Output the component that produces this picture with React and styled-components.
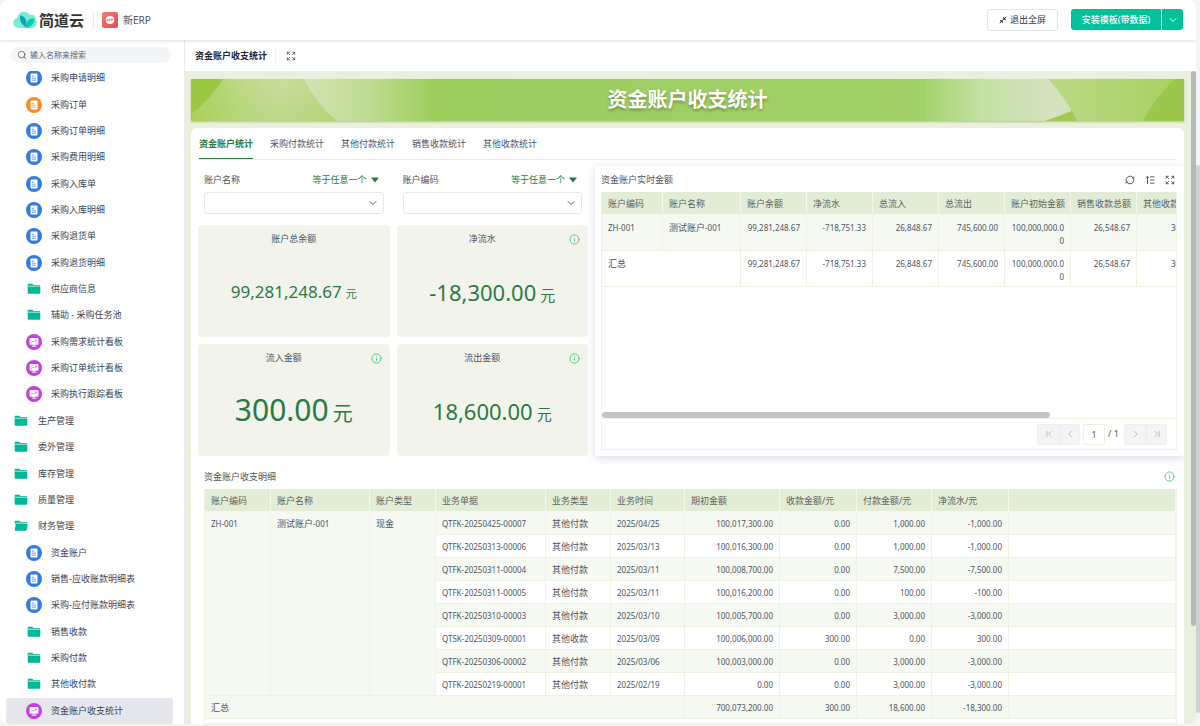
import React from "react";
import styled, { createGlobalStyle, css } from "styled-components";
import {
  ChevronDown,
  ChevronFirst,
  ChevronLast,
  ChevronLeft,
  ChevronRight,
  Expand,
  Info,
  Minimize2,
  Search
} from "lucide-react";

const colors = {
  teal: "#00c29a",
  green: "#2b7a45",
  info: "#4cc77c",
  text: "#4d5563",
  dark: "#1d2636",
  head: "#e3edd5",
  stripe: "#f6f9f2",
  line: "#edf2e2"
};

const GlobalStyle = createGlobalStyle`
  * {
    box-sizing: border-box;
  }

  body {
    margin: 0;
    background: #f4f4f5;
    color: ${colors.text};
    font: 9px/14px "Noto Sans", "Noto Sans CJK SC", sans-serif;
  }

  button,
  input,
  select {
    font: inherit;
    color: inherit;
    margin: 0;
  }

  button {
    padding: 0;
    border: 0;
    background: none;
    cursor: pointer;
  }
`;

const Window = styled.div`
  display: flex;
  height: 100vh;
  padding-bottom: 2px;
`;

const Frame = styled.div`
  display: flex;
  flex-direction: column;
  flex: 1;
  min-width: 0;
  overflow: hidden;
  border-radius: 8px;
  background: #fff;
`;

const OuterTrack = styled.div`
  display: flex;
  width: 4px;
  padding: 165px 0 11px;
`;

const OuterThumb = styled.div`
  flex: 1;
  border-radius: 2px;
  background: #d0d0d1;
`;

const Header = styled.header`
  display: flex;
  align-items: center;
  flex: none;
  height: 40px;
  padding: 0 13px;
  box-shadow: 0 1px 3px rgba(0, 0, 0, 0.14);
  z-index: 1;
`;

const Brand = styled.a`
  display: flex;
  align-items: center;
  gap: 2px;
  color: #333;
  font-size: 15px;
  font-weight: 700;
  line-height: 20px;
  text-decoration: none;
`;

const AppName = styled.div`
  display: flex;
  align-items: center;
  gap: 5px;
  height: 16px;
  margin-left: 9px;
  padding-left: 8px;
  border-left: 1px solid #ececee;
  font-size: 10px;
`;

const HeaderActions = styled.div`
  display: flex;
  margin-left: auto;
`;

const ExitButton = styled.button`
  display: flex;
  align-items: center;
  justify-content: center;
  gap: 3px;
  width: 71px;
  height: 22px;
  margin-right: 13px;
  border: 1px solid #e3e4e7;
  border-radius: 3px;
  color: #2f3747;
`;

const InstallButton = styled.button`
  width: ${(props) => (props.$small ? 21 : 90)}px;
  height: 21px;
  margin-left: ${(props) => (props.$small ? 1 : 0)}px;
  border-radius: ${(props) => (props.$small ? "0 3px 3px 0" : "3px 0 0 3px")};
  background: ${colors.teal};
  color: #fff;
  font-weight: 500;

  svg {
    display: block;
    margin: 0 auto;
  }
`;

const Body = styled.div`
  display: flex;
  flex: 1;
  min-height: 0;
`;

const Sidebar = styled.nav`
  display: flex;
  flex-direction: column;
  width: 184px;
  flex: none;
  padding-top: 7px;
`;

const SearchBox = styled.label`
  display: flex;
  align-items: center;
  gap: 3px;
  flex: none;
  height: 16px;
  margin: 0 13px 8px 11px;
  padding: 0 6px;
  border-radius: 8px;
  background: #f3f5f7;
  color: #5c6574;
  font-size: 8px;

  svg {
    flex: none;
  }

  input {
    width: 100%;
    padding: 0;
    border: 0;
    outline: 0;
    background: none;
  }

  input::placeholder {
    color: #5c6574;
    opacity: 1;
  }
`;

const NavScroll = styled.div`
  display: flex;
  flex: 1;
  min-height: 0;
  overflow: hidden;
`;

/* the list is scrolled a few pixels under the search box */
const NavList = styled.ul`
  display: flex;
  flex-direction: column;
  flex: 1;
  margin: -6px 11px 0 6px;
  padding: 0;
  list-style: none;
`;

const NavItem = styled.li`
  display: flex;
  flex: 1 0 26px;
  border-radius: 3px;
  background: ${(props) => (props.$active ? "#e6e7ed" : "none")};

  a {
    display: flex;
    align-items: center;
    gap: 9px;
    padding-left: ${(props) => (props.$nested ? 20 : 7)}px;
    color: #3c4556;
    text-decoration: none;
  }
`;

const Main = styled.main`
  display: flex;
  flex-direction: column;
  flex: 1;
  min-width: 0;
  border-left: 1px solid #e9ebee;
`;

const TitleBar = styled.div`
  display: flex;
  align-items: center;
  flex: none;
  height: 31px;
  padding-left: 10px;
  color: ${colors.dark};

  h1 {
    margin: 0;
    padding-right: 8px;
    border-right: 1px solid #eee;
    font-size: 9px;
    font-weight: 700;
  }

  button {
    margin-left: 10px;
    color: ${colors.text};
  }

  svg {
    display: block;
  }
`;

const Board = styled.div`
  display: flex;
  flex: 1;
  min-height: 0;
  background: #e9f0de;
`;

const BoardContent = styled.div`
  display: flex;
  flex-direction: column;
  flex: 1;
  min-width: 0;
  gap: 7px;
  padding: 8px 7px 0 6px;
`;

const BoardThumb = styled.div`
  width: 5px;
  height: 85%;
  border-radius: 3px;
  background: #b4bbb2;
`;

const Banner = styled.div`
  position: relative;
  flex: none;
  height: 42px;
  overflow: hidden;
  box-shadow: 0 1px 2px rgba(80, 100, 40, 0.35);

  svg {
    display: block;
    width: 100%;
    height: 42px;
  }

  h2 {
    position: absolute;
    inset: 0;
    margin: 0;
    color: #fff;
    font-size: 20px;
    font-weight: 700;
    line-height: 42px;
    text-align: center;
    text-shadow: 0 2px 3px rgba(60, 90, 20, 0.5);
  }
`;

const Card = styled.div`
  display: flex;
  flex-direction: column;
  flex: 1;
  min-height: 0;
  overflow: hidden;
  padding-left: 7px;
  border-radius: 6px 6px 0 0;
  background: #fff;
`;

const Tabs = styled.div`
  display: flex;
  gap: 17px;
  flex: none;
  height: 32px;
  margin: 0 7px 6px 0;
  padding-left: 1px;
  border-bottom: 1px solid #e8e9ea;
`;

const Tab = styled.button`
  padding-top: 2px;
  border-bottom: 1px solid transparent;

  ${(props) =>
    props.$active &&
    css`
      border-color: ${colors.green};
      color: ${colors.green};
      font-weight: 700;
    `}
`;

const Upper = styled.div`
  display: grid;
  grid-template-columns: minmax(0, 390fr) minmax(0, 589fr);
  gap: 7px;
  flex: none;
`;

const Widgets = styled.div`
  display: grid;
  grid-template-columns: 1fr 1fr;
  grid-template-rows: 52px 112px 112px;
  gap: 7px;
`;

const Filter = styled.div`
  padding: 7px 6px 0;
`;

const FilterHead = styled.div`
  display: flex;
  justify-content: space-between;
  height: 14px;
  margin-bottom: 5px;

  button {
    display: flex;
    align-items: center;
    gap: 4px;
    padding-right: 5px;
    color: ${colors.green};
  }
`;

const Select = styled.div`
  display: grid;
  align-items: center;

  select,
  svg {
    grid-area: 1 / 1;
  }

  select {
    width: 100%;
    height: 22px;
    appearance: none;
    border: 1px solid #e6e7e8;
    border-radius: 3px;
    background: #fff;
  }

  svg {
    justify-self: end;
    margin-right: 5px;
    color: ${colors.green};
    pointer-events: none;
  }
`;

const Metric = styled.section`
  display: grid;
  grid-template-rows: 28px 1fr 4px;
  justify-items: center;
  align-items: center;
  border-radius: 4px;
  background: #f2f4eb;

  h3,
  svg {
    grid-area: 1 / 1;
  }

  h3 {
    margin: 0;
    padding-right: ${(props) => (props.$info ? 20 : 0)}px;
    font-size: 9px;
    font-weight: 400;
  }

  svg {
    justify-self: end;
    margin-right: 8px;
    color: ${colors.info};
  }

  p {
    margin: 0;
    color: ${colors.green};
    font-size: ${(props) => props.$size}px;
    line-height: 40px;
    white-space: nowrap;
  }

  small {
    margin-left: 4px;
    font-size: ${(props) => props.$unit}px;
  }
`;

const Live = styled.section`
  display: flex;
  flex-direction: column;
  min-width: 0;
  height: 290px;
  padding: 0 7px 6px 6px;
  box-shadow: 0 2px 8px rgba(90, 80, 150, 0.22);
`;

const PanelHead = styled.div`
  display: flex;
  align-items: center;
  gap: 10px;
  flex: none;
  height: 26px;
  padding: 1px 2px 0 0;

  h3 {
    margin: 0 auto 0 0;
    font-size: 9px;
    font-weight: 400;
  }

  button {
    color: #444b5a;
  }

  svg {
    display: block;
  }
`;

const TableBox = styled.div`
  display: flex;
  flex-direction: column;
  flex: 1;
  min-height: 0;
  overflow: hidden;
  border: 1px solid ${colors.line};
  border-top: 0;
`;

const TableScroll = styled.div`
  flex: 1;
  overflow: hidden;
`;

const Table = styled.table`
  width: ${(props) => props.$width};
  table-layout: fixed;
  border-collapse: separate;
  border-spacing: 0;

  th,
  td {
    padding: 2px 6px 0;
    border-right: 1px solid ${colors.line};
    border-bottom: 1px solid ${colors.line};
    font-weight: 400;
    text-align: left;
    vertical-align: top;
    white-space: nowrap;
    line-height: 20px;
  }

  th {
    border-color: #f3f7ec;
    background: ${colors.head};
    color: #5b6263;
  }

  tr.stripe td,
  td[rowspan] {
    background: ${colors.stripe};
  }

  td.num {
    font-size: 8px;
    text-align: right;
  }
`;

const LiveTable = styled(Table)`
  td {
    height: 36px;
    padding-top: 6px;
    line-height: 13px;
  }

  td.num {
    white-space: normal;
    word-break: break-all;
  }
`;

const Code = styled.span`
  font-size: 8px;
`;

const ScrollThumb = styled.div`
  flex: none;
  width: 78%;
  height: 6px;
  border-radius: 3px;
  background: #c0c4c9;
`;

const Pager = styled.div`
  display: flex;
  align-items: center;
  justify-content: flex-end;
  gap: 3px;
  flex: none;
  height: 31px;
  padding-right: 9px;
  border-top: 1px solid ${colors.line};

  input {
    width: 22px;
    height: 21px;
    padding: 0;
    border: 1px solid ${colors.line};
    border-radius: 2px;
    text-align: center;
  }

  span {
    width: 13px;
    white-space: nowrap;
  }
`;

const PagerGroup = styled.div`
  display: flex;
  border: 1px solid #eef1ea;
  border-radius: 2px;
  background: #f3f4f6;
  color: #a9aeb6;

  button {
    display: grid;
    place-items: center;
    width: 21px;
    height: 19px;
  }

  button + button {
    width: 20px;
    border-left: 1px solid #eaeee6;
  }
`;

const Detail = styled.section`
  display: flex;
  flex-direction: column;
  flex: 1;
  min-height: 0;
  padding: 7px 7px 0 6px;

  ${PanelHead} svg {
    color: ${colors.info};
  }
`;

const Logo = () => (
  <svg width="24" height="18" viewBox="0 0 24 18">
    <path
      d="M6.2 17C2.8 17 .3 14.8.3 11.8c0-2.500 1.600-4.400 3.900-5C5 3.200 7.800.8 11 .8c2.600 0 4.500 1.200 5.700 3.200 1.700-.7 3.600-.4 4.900 1 .9 1 1.300 2.300 1.100 3.600 1 1 1.300 2.200 1 3.600-.5 2.900-2.700 4.800-5.600 4.800z"
      fill="#7ee8d6"
    />
    <path d="M13.600 16.500C9 13.800 6.200 10 7.200 4.200c4.400.9 7 4.700 6.400 12.300z" fill="#00a9b5" />
    <path d="M13.600 16.500c-1.300-4.800 1.600-9.300 7.600-9.300.8 4.600-2.600 8.900-7.600 9.300z" fill="#00cfae" />
  </svg>
);

const ErpIcon = () => (
  <svg width="16" height="16" viewBox="0 0 16 16">
    <defs>
      <linearGradient id="erp" x1="0" y1="0" x2="1" y2="1">
        <stop offset="0" stopColor="#f5787a" />
        <stop offset="1" stopColor="#e54d4d" />
      </linearGradient>
    </defs>
    <rect width="16" height="16" rx="2" fill="url(#erp)" />
    <ellipse cx="8" cy="8" rx="4.300" ry="3.900" fill="#fff" />
    <path d="M3.200 9.300 12.800 6.900" stroke="#ef6565" strokeWidth=".5" />
    <path d="M5 8.600v-1.200h1.400M7.300 8.800V7.400h1.400M9.600 8.600V7.200h1.400" stroke="#e75555" strokeWidth=".7" fill="none" />
  </svg>
);

const FormIcon = ({ fill }) => (
  <svg width="16" height="16" viewBox="0 0 16 16">
    <circle cx="8" cy="8" r="8" fill={fill} />
    <rect x="4.500" y="3.600" width="7" height="8.800" rx="1" fill="#fff" />
    <path d="M6 6.300h2M6 8.200h4M6 10.200h4" stroke={fill} strokeWidth=".7" />
  </svg>
);

const ChartIcon = () => (
  <svg width="16" height="16" viewBox="0 0 16 16">
    <circle cx="8" cy="8" r="8" fill="#c43fe0" />
    <rect x="3.500" y="4" width="9" height="6.700" rx="1" fill="#fff" />
    <path d="M8 10v2M5.800 12.200h4.600" stroke="#fff" strokeWidth=".9" />
    <path d="m5.600 8.600 1.600-1.500 1.200 1 2-2M9.200 6h1.300v1.300" stroke="#c43fe0" strokeWidth=".6" fill="none" />
  </svg>
);

const FolderIcon = ({ open }) => (
  <svg width="16" height="16" viewBox="0 0 16 16">
    <path d="M1.700 3.800c0-.6.400-1 1-1h3.600l1.200 1.300h5.600c.6 0 1 .4 1 1v.9H1.700z" fill="#00b896" />
    <path d="M1.900 4.600h12v2h-12z" fill="#7adcca" />
    <path
      d={
        open
          ? "M2.800 6.100h12L13.600 12c-.1.500-.4.800-.9.800H2.600c-.6 0-.9-.4-.9-.9z"
          : "M1.700 6.100h12.600v5.700c0 .6-.4 1-1 1H2.700c-.6 0-1-.4-1-1z"
      }
      fill="#00b896"
    />
  </svg>
);

const RefreshIcon = () => (
  <svg width="10" height="10" viewBox="0 0 10 10" fill="none" stroke="currentColor" strokeWidth=".9">
    <path d="M1.200 6.200A4 4 0 0 1 8.300 2.800M8.800 3.800A4 4 0 0 1 1.700 7.200" />
    <path d="M8.900 1.500 8.700 3.300 7 3M1.100 8.500l.2-1.800L3 7" />
  </svg>
);

const SortIcon = () => (
  <svg width="10" height="10" viewBox="0 0 10 10" fill="none" stroke="currentColor" strokeWidth=".9">
    <path d="M2.500 9V1.300M.6 3.200l1.900-1.900L4 2.800M5 1.800h4.500M5 5h4.500M5 8.200h4.500" />
  </svg>
);

const Caret = () => (
  <svg width="8" height="6" viewBox="0 0 8 6">
    <path d="M.8.500h6.400c.4 0 .6.500.3.800L4.400 4.900c-.2.300-.6.300-.8 0L.5 1.300C.2 1 .4.500.8.500z" fill="currentColor" />
  </svg>
);

const BannerArt = () => (
  <svg viewBox="0 0 993 42" preserveAspectRatio="none">
    <defs>
      <linearGradient id="base" x1="0" x2="1">
        <stop offset="0" stopColor="#9acb59" />
        <stop offset=".5" stopColor="#9fcf64" />
        <stop offset="1" stopColor="#a6d36d" />
      </linearGradient>
      <radialGradient id="leftLeaf" gradientUnits="userSpaceOnUse" cx="90" cy="0" r="100">
        <stop offset="0" stopColor="#c9dc9f" />
        <stop offset=".4" stopColor="#bcd885" />
        <stop offset="1" stopColor="#a9cf56" />
      </radialGradient>
      <linearGradient id="leftFade" gradientUnits="userSpaceOnUse" x1="115" x2="250" y1="0" y2="0">
        <stop offset="0" stopColor="#d0e3b2" />
        <stop offset=".45" stopColor="#bfdb91" />
        <stop offset="1" stopColor="#9bcc57" />
      </linearGradient>
      <linearGradient id="rightFade" gradientUnits="userSpaceOnUse" x1="735" x2="860" y1="0" y2="0">
        <stop offset="0" stopColor="#a5d36d" />
        <stop offset=".45" stopColor="#c4e0a3" />
        <stop offset="1" stopColor="#d4e3be" />
      </linearGradient>
      <linearGradient id="rightLeaf" gradientUnits="userSpaceOnUse" x1="870" x2="985" y1="0" y2="0">
        <stop offset="0" stopColor="#bad882" />
        <stop offset="1" stopColor="#aad062" />
      </linearGradient>
    </defs>
    <rect width="993" height="42" fill="url(#base)" />
    <rect width="150" height="42" fill="url(#leftLeaf)" />
    <path d="M0 0h32Q18 22 0 35z" fill="#9bc743" />
    <path d="M113 0Q125 25 146 42H250V0z" fill="url(#leftFade)" />
    <path d="M735 0H880V42H735z" fill="url(#rightFade)" />
    <path d="M857 0Q876 20 886 42H993V0z" fill="url(#rightLeaf)" />
    <path d="M854 42 881 32 886 42z" fill="#a3c853" />
    <path d="M993 0h-9Q964 18 952 42h41z" fill="#9bc84c" />
  </svg>
);

const navItems = [
  { label: "采购申请明细", icon: "form", nested: true },
  { label: "采购订单", icon: "orange", nested: true },
  { label: "采购订单明细", icon: "form", nested: true },
  { label: "采购费用明细", icon: "form", nested: true },
  { label: "采购入库单", icon: "form", nested: true },
  { label: "采购入库明细", icon: "form", nested: true },
  { label: "采购退货单", icon: "form", nested: true },
  { label: "采购退货明细", icon: "form", nested: true },
  { label: "供应商信息", icon: "folder", nested: true },
  { label: "辅助 - 采购任务池", icon: "folder", nested: true },
  { label: "采购需求统计看板", icon: "chart", nested: true },
  { label: "采购订单统计看板", icon: "chart", nested: true },
  { label: "采购执行跟踪看板", icon: "chart", nested: true },
  { label: "生产管理", icon: "folder" },
  { label: "委外管理", icon: "folder" },
  { label: "库存管理", icon: "folder" },
  { label: "质量管理", icon: "folder" },
  { label: "财务管理", icon: "open" },
  { label: "资金账户", icon: "form", nested: true },
  { label: "销售-应收账款明细表", icon: "form", nested: true },
  { label: "采购-应付账款明细表", icon: "form", nested: true },
  { label: "销售收款", icon: "folder", nested: true },
  { label: "采购付款", icon: "folder", nested: true },
  { label: "其他收付款", icon: "folder", nested: true },
  { label: "资金账户收支统计", icon: "chart", nested: true, active: true }
];

const navIcons = {
  form: <FormIcon fill="#2f7be8" />,
  orange: <FormIcon fill="#ff8a1f" />,
  chart: <ChartIcon />,
  folder: <FolderIcon />,
  open: <FolderIcon open />
};

const tabs = ["资金账户统计", "采购付款统计", "其他付款统计", "销售收款统计", "其他收款统计"];

const filters = [
  { id: "account-name", label: "账户名称" },
  { id: "account-code", label: "账户编码" }
];

const metrics = [
  { label: "账户总余额", value: "99,281,248.67", size: 17, unit: 11 },
  { label: "净流水", value: "-18,300.00", size: 22, unit: 15, info: true },
  { label: "流入金额", value: "300.00", size: 30, unit: 20, info: true },
  { label: "流出金额", value: "18,600.00", size: 22, unit: 15, info: true }
];

const liveHeads = [
  "账户编码",
  "账户名称",
  "账户余额",
  "净流水",
  "总流入",
  "总流出",
  "账户初始金额",
  "销售收款总额",
  "其他收款总额"
];

const liveWidths = [61, 78, 66, 66, 66, 66, 66, 66, 66];

const liveNumbers = [
  "99,281,248.67",
  "-718,751.33",
  "26,848.67",
  "745,600.00",
  "100,000,000.00",
  "26,548.67",
  "300.00"
];

const detailHeads = [
  "账户编码",
  "账户名称",
  "账户类型",
  "业务单据",
  "业务类型",
  "业务时间",
  "期初金额",
  "收款金额/元",
  "付款金额/元",
  "净流水/元",
  ""
];

const detailWidths = [66, 99, 66, 110, 65, 74, 95, 77, 75, 77];

const detailRows = [
  ["QTFK-20250425-00007", "其他付款", "2025/04/25", "100,017,300.00", "0.00", "1,000.00", "-1,000.00"],
  ["QTFK-20250313-00006", "其他付款", "2025/03/13", "100,016,300.00", "0.00", "1,000.00", "-1,000.00"],
  ["QTFK-20250311-00004", "其他付款", "2025/03/11", "100,008,700.00", "0.00", "7,500.00", "-7,500.00"],
  ["QTFK-20250311-00005", "其他付款", "2025/03/11", "100,016,200.00", "0.00", "100.00", "-100.00"],
  ["QTFK-20250310-00003", "其他付款", "2025/03/10", "100,005,700.00", "0.00", "3,000.00", "-3,000.00"],
  ["QTSK-20250309-00001", "其他收款", "2025/03/09", "100,006,000.00", "300.00", "0.00", "300.00"],
  ["QTFK-20250306-00002", "其他付款", "2025/03/06", "100,003,000.00", "0.00", "3,000.00", "-3,000.00"],
  ["QTFK-20250219-00001", "其他付款", "2025/02/19", "0.00", "0.00", "3,000.00", "-3,000.00"]
];

const detailTotals = ["700,073,200.00", "300.00", "18,600.00", "-18,300.00"];

const Columns = ({ widths }) => (
  <colgroup>
    {widths.map((width, i) => (
      <col key={i} width={width} />
    ))}
  </colgroup>
);

const NumberCells = ({ values }) =>
  values.map((value, i) => (
    <td className="num" key={i}>
      {value}
    </td>
  ));

const AccountName = () => (
  <>
    测试账户<Code>-001</Code>
  </>
);

const LivePanel = () => (
  <Live>
    <PanelHead>
      <h3>资金账户实时金额</h3>
      <button aria-label="刷新">
        <RefreshIcon />
      </button>
      <button aria-label="排序">
        <SortIcon />
      </button>
      <button aria-label="放大">
        <Expand size={10} />
      </button>
    </PanelHead>
    <TableBox>
      <TableScroll>
        <LiveTable $width="601px">
          <Columns widths={liveWidths} />
          <thead>
            <tr>
              {liveHeads.map((head) => (
                <th key={head}>{head}</th>
              ))}
            </tr>
          </thead>
          <tbody>
            <tr className="stripe">
              <td>
                <Code>ZH-001</Code>
              </td>
              <td>
                <AccountName />
              </td>
              <NumberCells values={liveNumbers} />
            </tr>
            <tr>
              <td colSpan={2}>汇总</td>
              <NumberCells values={liveNumbers} />
            </tr>
          </tbody>
        </LiveTable>
      </TableScroll>
      <ScrollThumb />
      <Pager>
        <PagerGroup>
          <button aria-label="首页">
            <ChevronFirst size={10} />
          </button>
          <button aria-label="上一页">
            <ChevronLeft size={10} />
          </button>
        </PagerGroup>
        <input aria-label="页码" defaultValue="1" />
        <span>/ 1</span>
        <PagerGroup>
          <button aria-label="下一页">
            <ChevronRight size={10} />
          </button>
          <button aria-label="末页">
            <ChevronLast size={10} />
          </button>
        </PagerGroup>
      </Pager>
    </TableBox>
  </Live>
);

const DetailPanel = () => (
  <Detail>
    <PanelHead>
      <h3>资金账户收支明细</h3>
      <Info size={11} />
    </PanelHead>
    <TableBox>
      <Table $width="100%">
        <Columns widths={detailWidths} />
        <thead>
          <tr>
            {detailHeads.map((head) => (
              <th key={head}>{head}</th>
            ))}
          </tr>
        </thead>
        <tbody>
          {detailRows.map(([code, type, date, ...numbers], i) => (
            <tr key={code} className={i % 2 ? undefined : "stripe"}>
              {i === 0 && (
                <>
                  <td rowSpan={8}>
                    <Code>ZH-001</Code>
                  </td>
                  <td rowSpan={8}>
                    <AccountName />
                  </td>
                  <td rowSpan={8}>现金</td>
                </>
              )}
              <td>
                <Code>{code}</Code>
              </td>
              <td>{type}</td>
              <td>
                <Code>{date}</Code>
              </td>
              <NumberCells values={numbers} />
              <td />
            </tr>
          ))}
          <tr className="stripe">
            <td colSpan={6}>汇总</td>
            <NumberCells values={detailTotals} />
            <td />
          </tr>
        </tbody>
      </Table>
    </TableBox>
  </Detail>
);

const App = () => {
  return (
    <Window>
      <GlobalStyle />
      <Frame>
        <Header>
          <Brand href="#">
            <Logo />
            简道云
          </Brand>
          <AppName>
            <ErpIcon />
            新ERP
          </AppName>
          <HeaderActions>
            <ExitButton>
              <Minimize2 size={8} strokeWidth={3} />
              退出全屏
            </ExitButton>
            <InstallButton>安装模板(带数据)</InstallButton>
            <InstallButton $small aria-label="更多">
              <ChevronDown size={12} />
            </InstallButton>
          </HeaderActions>
        </Header>
        <Body>
          <Sidebar>
            <SearchBox>
              <Search size={10} />
              <input placeholder="输入名称来搜索" />
            </SearchBox>
            <NavScroll>
              <NavList>
                {navItems.map(({ label, icon, nested, active }) => (
                  <NavItem key={label} $nested={nested} $active={active}>
                    <a href="#">
                      {navIcons[icon]}
                      {label}
                    </a>
                  </NavItem>
                ))}
              </NavList>
            </NavScroll>
          </Sidebar>
          <Main>
            <TitleBar>
              <h1>资金账户收支统计</h1>
              <button aria-label="全屏">
                <Expand size={10} />
              </button>
            </TitleBar>
            <Board>
              <BoardContent>
                <Banner>
                  <BannerArt />
                  <h2>资金账户收支统计</h2>
                </Banner>
                <Card>
                  <Tabs>
                    {tabs.map((tab, i) => (
                      <Tab key={tab} $active={i === 0}>
                        {tab}
                      </Tab>
                    ))}
                  </Tabs>
                  <Upper>
                    <Widgets>
                      {filters.map(({ id, label }) => (
                        <Filter key={id}>
                          <FilterHead>
                            <label htmlFor={id}>{label}</label>
                            <button>
                              等于任意一个
                              <Caret />
                            </button>
                          </FilterHead>
                          <Select>
                            <select id={id} />
                            <ChevronDown size={12} />
                          </Select>
                        </Filter>
                      ))}
                      {metrics.map(({ label, value, size, unit, info }) => (
                        <Metric key={label} $size={size} $unit={unit} $info={info}>
                          <h3>{label}</h3>
                          {info && <Info size={11} />}
                          <p>
                            {value}
                            <small>元</small>
                          </p>
                        </Metric>
                      ))}
                    </Widgets>
                    <LivePanel />
                  </Upper>
                  <DetailPanel />
                </Card>
              </BoardContent>
              <BoardThumb />
            </Board>
          </Main>
        </Body>
      </Frame>
      <OuterTrack>
        <OuterThumb />
      </OuterTrack>
    </Window>
  );
};

export default App;
